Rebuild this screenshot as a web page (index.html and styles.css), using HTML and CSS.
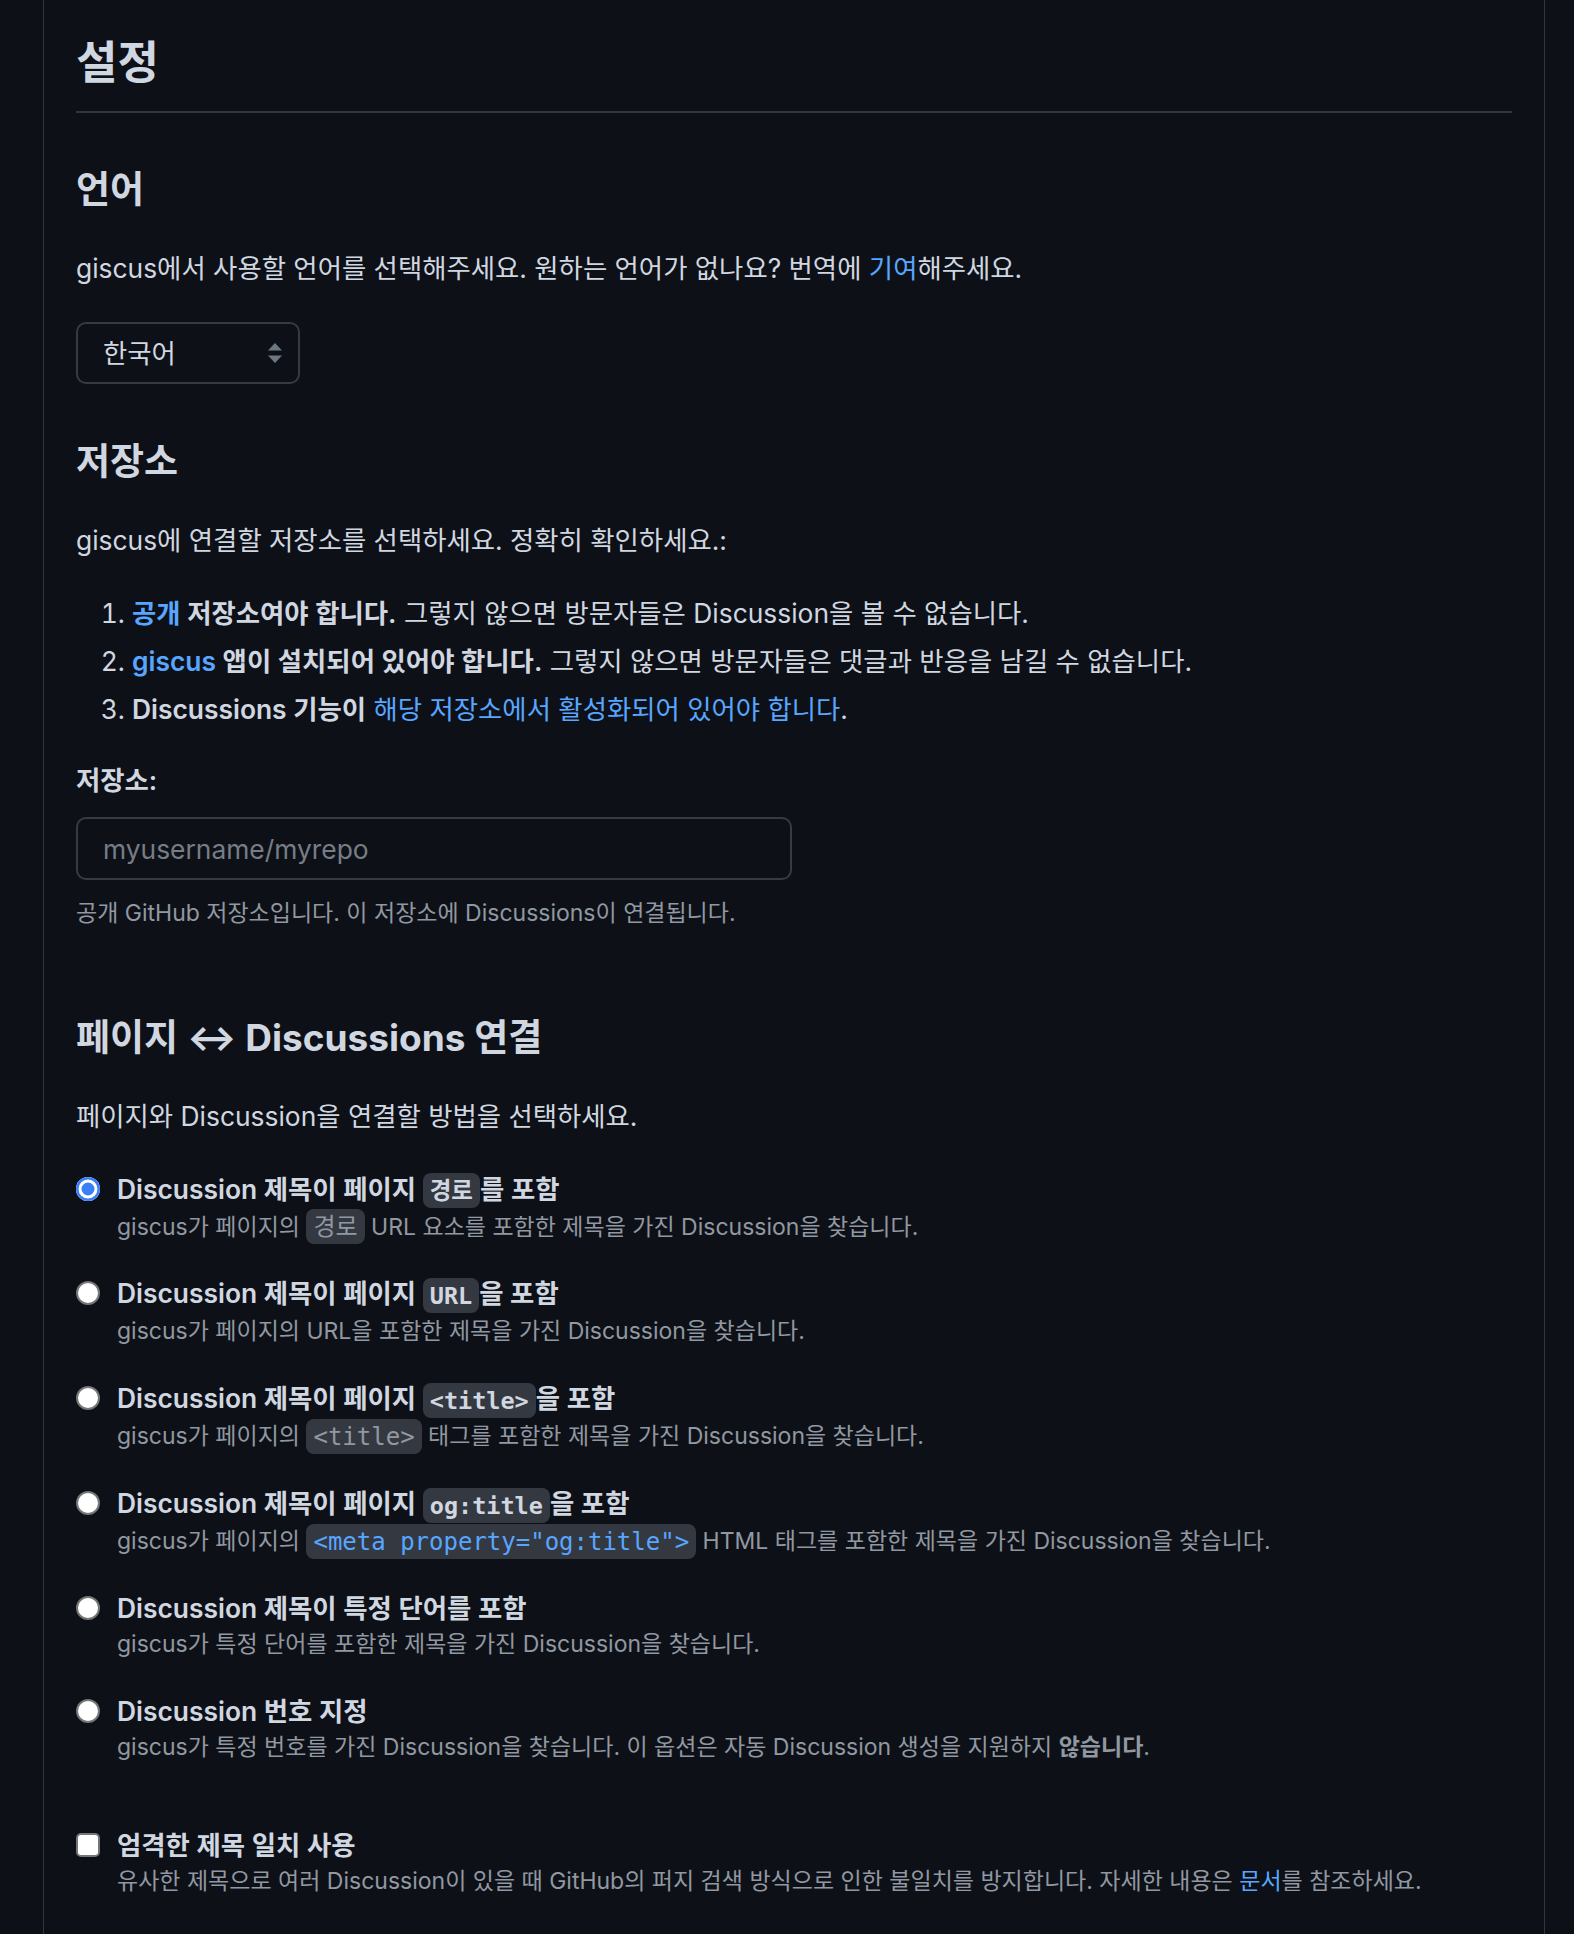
FILE: index.html
```html
<!DOCTYPE html>
<html lang="ko">
<head>
    <meta charset="UTF-8">
    <meta name="viewport" content="width=device-width, initial-scale=1.0">
    <title>giscus 설정</title>
    <link rel="stylesheet" href="styles.css">
</head>
<body>
    <main class="panel">
        <h1 class="page-title">설정</h1>

        <h2 class="heading first">언어</h2>
        <p class="text">giscus에서 사용할 언어를 선택해주세요. 원하는 언어가 없나요? 번역에 <a href="#">기여</a>해주세요.</p>
        <div class="select-wrap">
            <select class="select">
                <option>한국어</option>
            </select>
            <svg class="select-arrow" width="14" height="22" viewBox="0 0 14 22">
                <path d="M7 1 L14 8.5 H0 Z" fill="#6e7681"/>
                <path d="M7 21 L14 13.5 H0 Z" fill="#6e7681"/>
            </svg>
        </div>

        <h2 class="heading">저장소</h2>
        <p class="text">giscus에 연결할 저장소를 선택하세요. 정확히 확인하세요.:</p>
        <ol class="steps">
            <li><strong><a href="#">공개</a> 저장소여야 합니다.</strong> 그렇지 않으면 방문자들은 Discussion을 볼 수 없습니다.</li>
            <li><strong><a href="#">giscus</a> 앱이 설치되어 있어야 합니다.</strong> 그렇지 않으면 방문자들은 댓글과 반응을 남길 수 없습니다.</li>
            <li><strong>Discussions 기능이</strong> <a href="#">해당 저장소에서 활성화되어 있어야 합니다</a>.</li>
        </ol>
        <label class="label" for="repo">저장소:</label>
        <input class="field" id="repo" type="text" placeholder="myusername/myrepo">
        <p class="hint">공개 GitHub 저장소입니다. 이 저장소에 Discussions이 연결됩니다.</p>

        <h2 class="heading wide">페이지 ↔ Discussions 연결</h2>
        <p class="text">페이지와 Discussion을 연결할 방법을 선택하세요.</p>

        <div class="options">
            <label class="option">
                <input class="radio" type="radio" name="mapping" checked>
                <span class="option-body">
                    <span class="option-title">Discussion 제목이 페이지 <code>경로</code>를 포함</span>
                    <span class="option-desc">giscus가 페이지의 <code>경로</code> URL 요소를 포함한 제목을 가진 Discussion을 찾습니다.</span>
                </span>
            </label>
            <label class="option">
                <input class="radio" type="radio" name="mapping">
                <span class="option-body">
                    <span class="option-title">Discussion 제목이 페이지 <code>URL</code>을 포함</span>
                    <span class="option-desc">giscus가 페이지의 URL을 포함한 제목을 가진 Discussion을 찾습니다.</span>
                </span>
            </label>
            <label class="option">
                <input class="radio" type="radio" name="mapping">
                <span class="option-body">
                    <span class="option-title">Discussion 제목이 페이지 <code>&lt;title&gt;</code>을 포함</span>
                    <span class="option-desc">giscus가 페이지의 <code>&lt;title&gt;</code> 태그를 포함한 제목을 가진 Discussion을 찾습니다.</span>
                </span>
            </label>
            <label class="option">
                <input class="radio" type="radio" name="mapping">
                <span class="option-body">
                    <span class="option-title">Discussion 제목이 페이지 <code>og:title</code>을 포함</span>
                    <span class="option-desc">giscus가 페이지의 <a href="#"><code class="code-link">&lt;meta property="og:title"&gt;</code></a> HTML 태그를 포함한 제목을 가진 Discussion을 찾습니다.</span>
                </span>
            </label>
            <label class="option">
                <input class="radio" type="radio" name="mapping">
                <span class="option-body">
                    <span class="option-title">Discussion 제목이 특정 단어를 포함</span>
                    <span class="option-desc">giscus가 특정 단어를 포함한 제목을 가진 Discussion을 찾습니다.</span>
                </span>
            </label>
            <label class="option">
                <input class="radio" type="radio" name="mapping">
                <span class="option-body">
                    <span class="option-title">Discussion 번호 지정</span>
                    <span class="option-desc">giscus가 특정 번호를 가진 Discussion을 찾습니다. 이 옵션은 자동 Discussion 생성을 지원하지 <strong>않습니다</strong>.</span>
                </span>
            </label>

            <label class="option strict">
                <input class="checkbox" type="checkbox">
                <span class="option-body">
                    <span class="option-title">엄격한 제목 일치 사용</span>
                    <span class="option-desc">유사한 제목으로 여러 Discussion이 있을 때 GitHub의 퍼지 검색 방식으로 인한 불일치를 방지합니다. 자세한 내용은 <a href="#">문서</a>를 참조하세요.</span>
                </span>
            </label>
        </div>
    </main>
</body>
</html>
```

FILE: styles.css
```css
* {
    margin: 0;
    padding: 0;
    box-sizing: border-box;
}

body {
    background-color: #0d1117;
    color: #d1d7e0;
    font-family: Inter, "Noto Sans CJK KR", sans-serif;
    font-size: 26.4px;
    line-height: 36px;
}

a {
    color: #58a6ff;
    text-decoration: none;
}

strong {
    font-weight: 600;
}

.panel {
    margin-left: 43px;
    width: 1502px;
    min-height: 1934px;
    border-left: 1px solid #30363d;
    border-right: 1px solid #30363d;
    padding: 37px 32px 60px;
}

.page-title {
    font-size: 45px;
    line-height: 52px;
    font-weight: 700;
    padding-bottom: 22px;
    border-bottom: 2px solid #30363d;
}

.heading {
    font-size: 37px;
    line-height: 45px;
    font-weight: 700;
    margin-top: 54.5px;
}

.heading.first {
    margin-top: 53.5px;
}

.heading.wide {
    margin-top: 86.5px;
}

.text {
    margin-top: 38.5px;
}

/* language picker */
.select-wrap {
    position: relative;
    width: 224px;
    margin-top: 36px;
}

.select {
    appearance: none;
    display: block;
    width: 100%;
    height: 62px;
    padding: 0 25px;
    font: inherit;
    color: inherit;
    background-color: #0d1117;
    border: 2px solid #363b43;
    border-radius: 10px;
}

.select-arrow {
    position: absolute;
    right: 18px;
    top: 20px;
    pointer-events: none;
}

/* repository requirements */
.steps {
    margin-top: 37px;
    padding-left: 56px;
}

.steps li + li {
    margin-top: 12px;
}

.label {
    display: block;
    margin-top: 35px;
    font-weight: 600;
}

.field {
    display: block;
    width: 716px;
    height: 63px;
    margin-top: 19px;
    padding: 0 25px;
    font: inherit;
    color: inherit;
    background-color: #0d1117;
    border: 2px solid #363b43;
    border-radius: 10px;
}

.field::placeholder {
    color: #767d86;
}

.hint {
    margin-top: 18px;
    font-size: 23px;
    line-height: 30px;
    color: #9198a1;
}

/* mapping options */
.options {
    margin-top: 36.5px;
}

.option {
    display: flex;
    gap: 17px;
}

.option + .option {
    margin-top: 30.9px;
}

.option.strict {
    margin-top: 62px;
}

.option-body {
    display: flex;
    flex-direction: column;
}

.option-title {
    font-weight: 600;
}

.option-desc {
    font-size: 23px;
    color: #9198a1;
}

.radio,
.checkbox {
    appearance: none;
    flex: none;
    width: 24px;
    height: 24px;
    margin-top: 6px;
    background-color: #fff;
    border: 2px solid #767676;
}

.radio {
    border-radius: 50%;
}

.radio:checked {
    border: none;
    background-color: #3b7ff6;
    box-shadow: inset 0 0 0 2.5px #3b7ff6, inset 0 0 0 5.5px #fff;
}

.checkbox {
    border-radius: 5px;
}

code {
    font-family: "DejaVu Sans Mono", "Noto Sans CJK KR", monospace;
    font-size: 24px;
    padding: 3.5px 7px;
    border-radius: 8px;
    background-color: #343941;
}

.option-title code {
    font-size: 23.5px;
    font-weight: 700;
}

.code-link {
    color: #58a6ff;
}
```
